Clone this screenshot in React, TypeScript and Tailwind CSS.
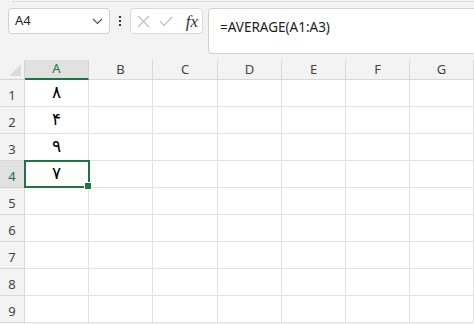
import React from 'react';

const cols = ['A', 'B', 'C', 'D', 'E', 'F', 'G'];
const rows = [1, 2, 3, 4, 5, 6, 7, 8, 9];
const values: Record<number, string> = { 1: '۸', 2: '۴', 3: '۹', 4: '۷' };

const FormulaBar: React.FC = () => (
  <div className="flex items-start pl-2 pt-[6px] h-[58px]">
    <div className="w-[102px] h-[26px] bg-white border border-[#d1d1d1] rounded-[4px] flex items-center justify-between pl-[6px] pr-[6px]">
      <span className="text-[13px] text-[#222]">A4</span>
      <svg width="11" height="7" viewBox="0 0 11 7" fill="none" stroke="#555" strokeWidth="1.2">
        <path d="M1 1l4.5 4.5L10 1" />
      </svg>
    </div>
    <div className="w-[20px] h-[26px] flex flex-col items-center justify-center gap-[2px]">
      <span className="w-[2px] h-[2px] bg-[#333]" />
      <span className="w-[2px] h-[2px] bg-[#333]" />
      <span className="w-[2px] h-[2px] bg-[#333]" />
    </div>
    <div className="w-[73px] h-[26px] bg-white border border-[#d9d9d9] rounded-[4px] flex items-center pl-[6px] pr-[4px]">
      <svg width="13" height="13" viewBox="0 0 13 13" fill="none" stroke="#bdbdbd" strokeWidth="1.1">
        <path d="M1 1l11 11M12 1L1 12" />
      </svg>
      <svg className="ml-[9px]" width="14" height="11" viewBox="0 0 14 11" fill="none" stroke="#bdbdbd" strokeWidth="1.1">
        <path d="M1 5.5l4 4L13 1" />
      </svg>
      <span className="ml-auto text-[17px] italic text-[#333] leading-none" style={{ fontFamily: '"Liberation Serif", serif' }}>
        fx
      </span>
    </div>
    <div className="ml-[5px] flex-1 h-[46px] -mr-[4px] bg-white border border-[#d1d1d1] rounded-[4px] pl-[11px] pt-[5px]">
      <span className="text-[13.5px] text-[#222]">=AVERAGE(A1:A3)</span>
    </div>
  </div>
);

export default function App() {
  return (
    <div
      className="w-[474px] h-[324px] overflow-hidden bg-[#f3f3f3] relative"
      style={{ fontFamily: '"Noto Sans", "Open Sans", sans-serif' }}
    >
      <div className="h-[2px] ml-[12px] border-b border-[#dcdcdc]" />
      <FormulaBar />
      <div className="grid grid-cols-[25px_64px_64px_65px_64px_64px_64px_64px] grid-rows-[20px_repeat(9,27px)]">
        <div className="border-r border-b border-[#d4d4d4] flex items-end justify-end pr-[3px] pb-[3px]">
          <svg width="12" height="12" viewBox="0 0 12 12">
            <path d="M12 0L12 12L0 12Z" fill="#dcdcdc" />
          </svg>
        </div>
        {cols.map((c) => (
          <div
            key={c}
            className={
              c === 'A'
                ? 'bg-[#e1e1e1] border-r border-[#d4d4d4] border-b-2 border-b-[#217346] flex items-center justify-center text-[13px] text-[#217346]'
                : 'border-r border-b border-[#d9d9d9] flex items-center justify-center text-[13px] text-[#444]'
            }
          >
            {c}
          </div>
        ))}
        {rows.map((r) => (
          <React.Fragment key={r}>
            <div
              className={
                r === 4
                  ? 'bg-[#e1e1e1] border-r border-b border-[#cfcfcf] flex items-end justify-center pb-[1px] text-[13px] text-[#217346]'
                  : 'border-r border-b border-[#d9d9d9] flex items-end justify-center pb-[1px] text-[13px] text-[#444]'
              }
            >
              {r}
            </div>
            {cols.map((c) => (
              <div
                key={c}
                className={
                  c === 'A' && r === 4
                    ? 'relative z-10 bg-white border-r border-b border-[#e1e1e1] flex items-center justify-center'
                    : 'relative bg-white border-r border-b border-[#e1e1e1] flex items-center justify-center'
                }
              >
                {c === 'A' && values[r] && (
                  <span
                    className="text-[17px] text-black leading-none -mt-[2px]"
                    style={{ fontFamily: '"DejaVu Sans", sans-serif' }}
                  >
                    {values[r]}
                  </span>
                )}
                {c === 'A' && r === 4 && (
                  <div className="absolute -left-[1px] -top-[1px] w-[66px] h-[28px] border-2 border-[#217346]">
                    <div className="absolute -right-[4px] -bottom-[4px] w-[6px] h-[6px] bg-[#217346] border border-white box-content" />
                  </div>
                )}
              </div>
            ))}
          </React.Fragment>
        ))}
      </div>
    </div>
  );
}
